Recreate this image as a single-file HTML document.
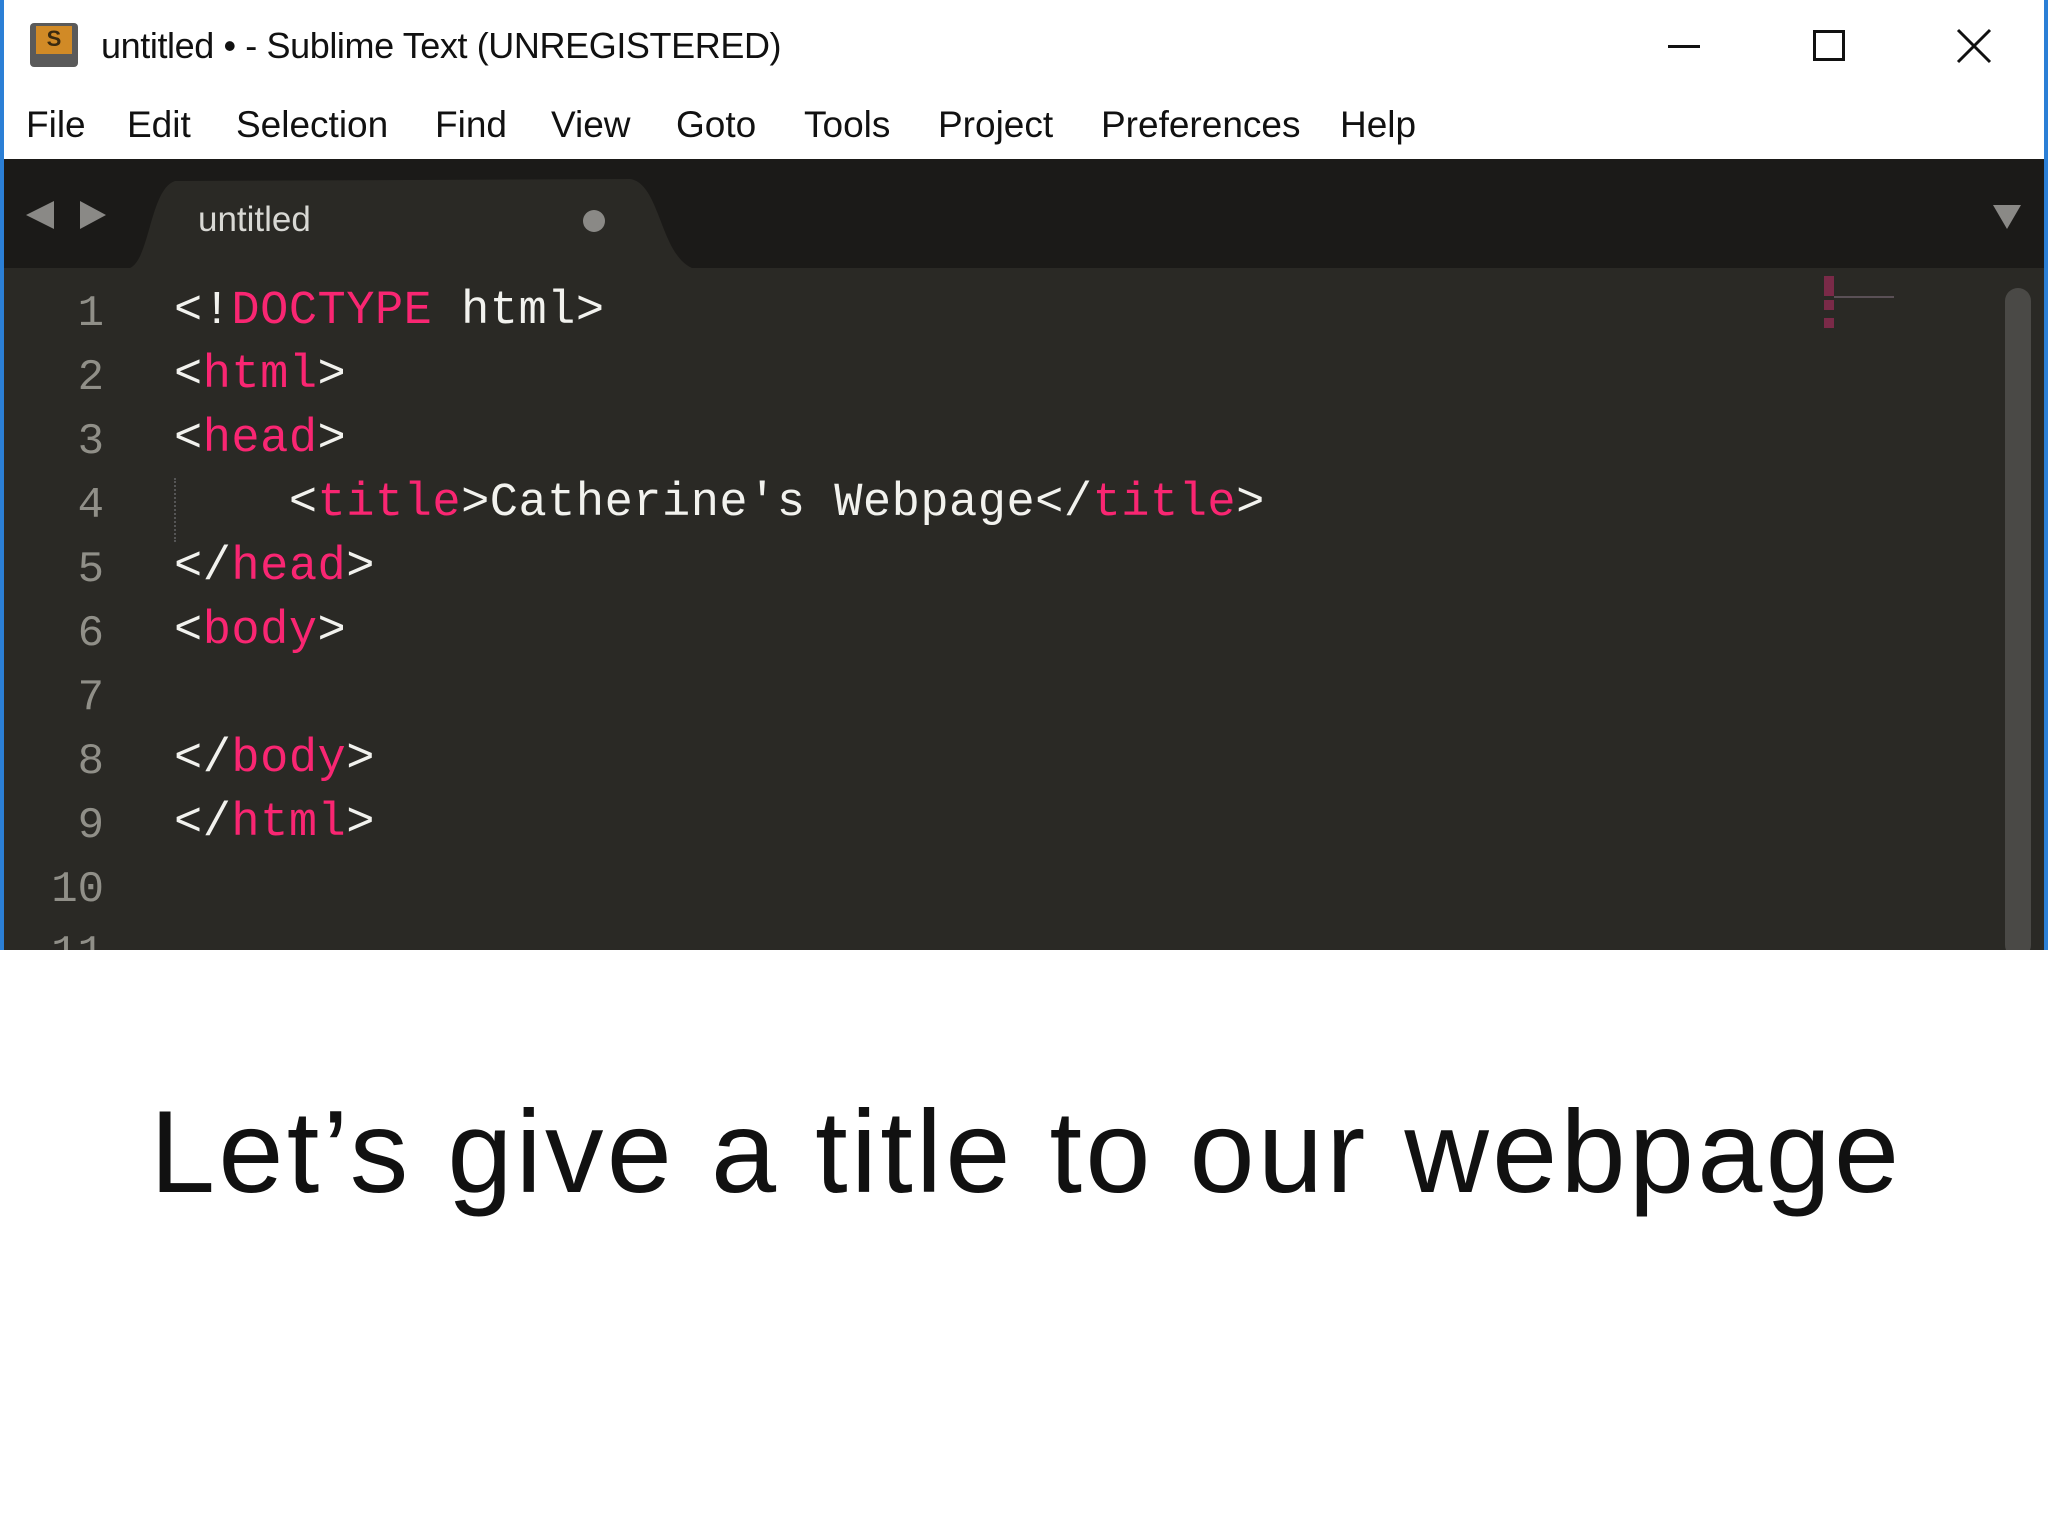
<!DOCTYPE html>
<html><head><meta charset="utf-8"><style>
*{margin:0;padding:0;box-sizing:border-box}
body{width:2048px;height:1536px;background:#fff;position:relative;overflow:hidden;font-family:"Liberation Sans",sans-serif}
.win{position:absolute;left:0;top:0;width:2048px;height:950px;background:#fff;border-left:4px solid #2b7fd6;border-right:4px solid #2b7fd6}
.t{position:absolute;white-space:pre}
.title{left:97px;top:25px;font-size:36px;letter-spacing:-0.4px;color:#111}
.menu{top:104px;font-size:37px;color:#111}
.dark{position:absolute;left:4px;top:159px;width:2040px;height:109px;background:#1b1a18}
.ed{position:absolute;left:4px;top:268px;width:2040px;height:682px;background:#2a2925;overflow:hidden}
.code{position:absolute;font-family:"Liberation Mono",monospace;font-size:47px;letter-spacing:0.5px;color:#f2f2ee;white-space:pre}
.p{color:#f92672}
.ln{position:absolute;right:0;width:100px;text-align:right;font-family:"Liberation Mono",monospace;font-size:44px;color:#908f88}
.big{position:absolute;left:150px;top:1084px;font-size:117px;color:#111;white-space:pre;letter-spacing:3.3px}
</style></head><body>
<div class="win">
 <div style="position:absolute;left:26px;top:23px;width:48px;height:44px;background:#5a5a5a;border-radius:4px"></div>
 <div style="position:absolute;left:32px;top:26px;width:36px;height:28px;background:#d18a26;color:#3a2a10;font-size:22px;font-weight:bold;text-align:center">S</div>
 <div class="t title">untitled • - Sublime Text (UNREGISTERED)</div>
 <div style="position:absolute;left:1664px;top:45px;width:32px;height:3px;background:#111"></div>
 <div style="position:absolute;left:1809px;top:30px;width:32px;height:31px;border:3px solid #111"></div>
 <svg style="position:absolute;left:1952px;top:28px" width="36" height="36"><path d="M2 2L34 34M34 2L2 34" stroke="#111" stroke-width="3"/></svg>
 <div class="t menu" style="left:22px">File</div>
 <div class="t menu" style="left:123px">Edit</div>
 <div class="t menu" style="left:232px">Selection</div>
 <div class="t menu" style="left:431px">Find</div>
 <div class="t menu" style="left:547px">View</div>
 <div class="t menu" style="left:672px">Goto</div>
 <div class="t menu" style="left:800px">Tools</div>
 <div class="t menu" style="left:934px">Project</div>
 <div class="t menu" style="left:1097px">Preferences</div>
 <div class="t menu" style="left:1336px">Help</div>
</div>
<div class="dark"></div>
<svg style="position:absolute;left:0;top:159px" width="2048" height="110">
 <path d="M130 109 C150 100 150 30 175 22 L630 20 C660 24 660 95 692 109 Z" fill="#2a2925"/>
 <polygon points="54,42 26,56 54,70" fill="#8a8986"/>
 <polygon points="80,42 106,56 80,70" fill="#8a8986"/>
 <polygon points="1993,46 2021,46 2007,70" fill="#8a8986"/>
 <circle cx="594" cy="62" r="11" fill="#8a8986"/>
</svg>
<div class="t" style="left:198px;top:200px;font-size:35px;color:#d8d8d4">untitled</div>
<div class="ed">
 <div style="position:absolute;left:2001px;top:20px;width:26px;height:670px;background:#4a4946;border-radius:13px"></div>
 <div style="position:absolute;left:1820px;top:8px;width:10px;height:20px;background:#7a2a48"></div>
 <div style="position:absolute;left:1820px;top:32px;width:10px;height:10px;background:#7a2a48"></div>
 <div style="position:absolute;left:1820px;top:50px;width:10px;height:10px;background:#7a2a48"></div>
 <div style="position:absolute;left:1830px;top:28px;width:60px;height:2px;background:#5a5056"></div>
 <div style="position:absolute;left:170px;top:210px;width:0;height:64px;border-left:2px dotted #555"></div>
</div>
<div style="position:absolute;left:4px;top:268px;width:2040px;height:682px;overflow:hidden">
 <div class="ln" style="left:0;top:14px;line-height:64px">1<br>2<br>3<br>4<br>5<br>6<br>7<br>8<br>9<br>10<br>11</div>
 <div class="code" style="left:170px;top:12px;line-height:64px">&lt;!<span class="p">DOCTYPE</span> html&gt;
&lt;<span class="p">html</span>&gt;
&lt;<span class="p">head</span>&gt;
    &lt;<span class="p">title</span>&gt;Catherine's Webpage&lt;/<span class="p">title</span>&gt;
&lt;/<span class="p">head</span>&gt;
&lt;<span class="p">body</span>&gt;

&lt;/<span class="p">body</span>&gt;
&lt;/<span class="p">html</span>&gt;</div>
</div>
<div class="big">Let’s give a title to our webpage</div>
</body></html>
